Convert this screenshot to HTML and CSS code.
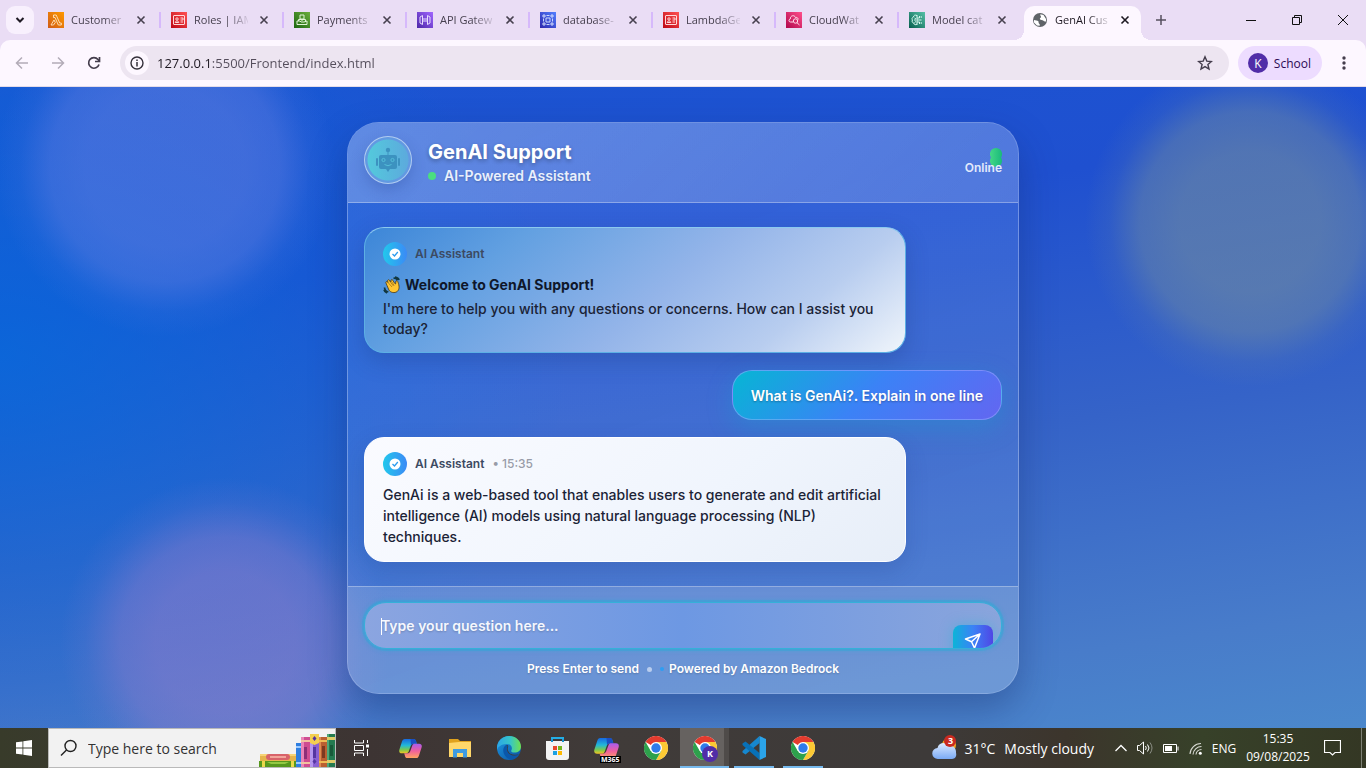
FILE: index.html
```html
<!DOCTYPE html>
<html lang="en">
<head>
<meta charset="utf-8">
<meta name="viewport" content="width=device-width, initial-scale=1">
<title>GenAI Customer Support</title>
<link rel="stylesheet" href="styles.css">
</head>
<body>
<svg class="defs" aria-hidden="true">
  <defs>
    <linearGradient id="g-orange" x1="0" y1="1" x2="1" y2="0"><stop offset="0" stop-color="#d05c17"/><stop offset="1" stop-color="#ff9900"/></linearGradient>
    <linearGradient id="g-red" x1="0" y1="1" x2="1" y2="0"><stop offset="0" stop-color="#bd0816"/><stop offset="1" stop-color="#ff5252"/></linearGradient>
    <linearGradient id="g-green" x1="0" y1="1" x2="1" y2="0"><stop offset="0" stop-color="#1b660f"/><stop offset="1" stop-color="#6cae3e"/></linearGradient>
    <linearGradient id="g-purple" x1="0" y1="1" x2="1" y2="0"><stop offset="0" stop-color="#4d27a8"/><stop offset="1" stop-color="#a166ff"/></linearGradient>
    <linearGradient id="g-blue" x1="0" y1="1" x2="1" y2="0"><stop offset="0" stop-color="#2e27ad"/><stop offset="1" stop-color="#527fff"/></linearGradient>
    <linearGradient id="g-pink" x1="0" y1="1" x2="1" y2="0"><stop offset="0" stop-color="#b0084d"/><stop offset="1" stop-color="#ff4f8b"/></linearGradient>
    <linearGradient id="g-teal" x1="0" y1="1" x2="1" y2="0"><stop offset="0" stop-color="#055f4e"/><stop offset="1" stop-color="#56c0a7"/></linearGradient>
    <linearGradient id="g-cop1" x1="0" y1="0" x2="0" y2="1"><stop offset="0" stop-color="#1769e0"/><stop offset=".45" stop-color="#22b8d8"/><stop offset=".75" stop-color="#79c950"/><stop offset="1" stop-color="#f3c422"/></linearGradient>
    <linearGradient id="g-cop2" x1="0" y1="0" x2="0" y2="1"><stop offset="0" stop-color="#a85cf0"/><stop offset=".5" stop-color="#ef5f9c"/><stop offset="1" stop-color="#ffa45f"/></linearGradient>
    <linearGradient id="g-edge1" x1="0" y1="0" x2="1" y2="0"><stop offset="0" stop-color="#2ba5e8"/><stop offset=".55" stop-color="#36c5c9"/><stop offset="1" stop-color="#6fe04f"/></linearGradient>
    <linearGradient id="g-edge2" x1="0" y1="0" x2="1" y2="1"><stop offset="0" stop-color="#1d9be5"/><stop offset="1" stop-color="#0b4f9e"/></linearGradient>
    <linearGradient id="g-cloud" x1="0" y1="0" x2="0" y2="1"><stop offset="0" stop-color="#dceaff"/><stop offset="1" stop-color="#7aaaf5"/></linearGradient>
    <symbol id="x" viewBox="0 0 10 10"><path d="M1.500 1.500l7 7M8.500 1.500l-7 7" stroke="currentColor" stroke-width="1.600" fill="none"/></symbol>
    <symbol id="iam" viewBox="0 0 16 16"><rect width="16" height="16" fill="url(#g-red)"/><rect x="2.500" y="3.500" width="11" height="9" rx=".5" fill="none" stroke="#ffd9d9"/><circle cx="6" cy="7" r="1.200" fill="none" stroke="#ffd9d9"/><path d="M4.200 10.500c0-2 3.600-2 3.600 0zM9.500 6h2.500v2H9.500M9.500 10h2.500" fill="none" stroke="#ffd9d9"/></symbol>
    <symbol id="chrome" viewBox="0 0 24 24"><circle cx="12" cy="12" r="12" fill="#fff"/><path d="M12 12L1.600 6A12 12 0 0 1 22.400 6z" fill="#e33b2e"/><path d="M12 6h10.400A12 12 0 0 1 12 24l5.200-9z" fill="#fcc934"/><path d="M1.600 6A12 12 0 0 0 12 24l5.200-9L12 12 6.800 15z" fill="#2da14c"/><circle cx="12" cy="12" r="6" fill="#fff"/><circle cx="12" cy="12" r="4.700" fill="#2f7bea"/></symbol>
    <symbol id="copilot" viewBox="0 0 24 22"><path d="M6 1h9c2 0 2.500 1 3 3l.6 2h-3c-2 0-3 1-3.600 3l-1.800 5c-.5 1.500-1.400 2-2.800 2H3c-2.500 0-3.300-1.600-2.600-4L3 4c.7-2 1.400-3 3-3z" fill="url(#g-cop1)"/><path d="M12 1h3c2 0 2.500 1 3 3l.6 2h-3c-1.600 0-2.500.5-3.100 1.800z" fill="#1a4fc4"/><path d="M18 21H9c-2 0-2.500-1-3-3l-.6-2h3c2 0 3-1 3.600-3l1.800-5c.5-1.500 1.400-2 2.800-2H21c2.500 0 3.300 1.600 2.600 4L21 18c-.7 2-1.400 3-3 3z" fill="url(#g-cop2)"/></symbol>
    <symbol id="verified" viewBox="0 0 24 24"><circle cx="12" cy="12" r="5.500" fill="#fff"/><path d="M9.500 12l2 2 3.300-4" fill="none" stroke="#2c9bee" stroke-width="1.300"/></symbol>
  </defs>
</svg>

<header class="browser">
  <nav class="tabs" aria-label="Open tabs">
    <button class="tab-search" aria-label="Search tabs"><svg width="12" height="12" viewBox="0 0 12 12"><path d="M2.500 4L6 7.500 9.500 4" fill="none" stroke="#1f1a24" stroke-width="2"/></svg></button>
    <div class="tab"><svg class="fav" viewBox="0 0 16 16"><rect width="16" height="16" fill="url(#g-orange)"/><path d="M5.500 3h2.700l3.500 8h1.600v2h-3L7 5.500H5.500zM6 8l1.300 2.500L5.500 13H3z" fill="none" stroke="#ffe6c4" stroke-width=".9"/></svg><a href="#" class="tab-name">Customer</a><button class="close" aria-label="Close tab"><svg><use href="#x"/></svg></button></div>
    <div class="tab"><svg class="fav"><use href="#iam"/></svg><a href="#" class="tab-name">Roles | IAM</a><button class="close" aria-label="Close tab"><svg><use href="#x"/></svg></button></div>
    <div class="tab"><svg class="fav" viewBox="0 0 16 16"><rect width="16" height="16" fill="url(#g-green)"/><path d="M6 3h4v4H6zM3 9h3l1 1h3l3-1v3.500H3zM4.500 9V7.500h7V9M8 7v2" fill="none" stroke="#e1f5d5"/></svg><a href="#" class="tab-name">Payments</a><button class="close" aria-label="Close tab"><svg><use href="#x"/></svg></button></div>
    <div class="tab"><svg class="fav" viewBox="0 0 16 16"><rect width="16" height="16" fill="url(#g-purple)"/><path d="M5.500 3.500v9L3 11V5zM10.500 3.500v9L13 11V5zM7 6v4M9 6v4" fill="none" stroke="#e9dcff"/></svg><a href="#" class="tab-name">API Gatew</a><button class="close" aria-label="Close tab"><svg><use href="#x"/></svg></button></div>
    <div class="tab"><svg class="fav" viewBox="0 0 16 16"><rect width="16" height="16" fill="url(#g-blue)"/><path d="M3 3h2v2H3zM11 3h2v2h-2zM3 11h2v2H3zM11 11h2v2h-2zM6 6h4v4H6zM3.500 6.500v3M12.500 6.500v3M6.500 3.500h3M6.500 12.500h3" fill="none" stroke="#dce6ff" stroke-width=".9"/></svg><a href="#" class="tab-name">database-</a><button class="close" aria-label="Close tab"><svg><use href="#x"/></svg></button></div>
    <div class="tab"><svg class="fav"><use href="#iam"/></svg><a href="#" class="tab-name">LambdaG&#101;</a><button class="close" aria-label="Close tab"><svg><use href="#x"/></svg></button></div>
    <div class="tab"><svg class="fav" viewBox="0 0 16 16"><rect width="16" height="16" fill="url(#g-pink)"/><path d="M7 10H4.500C2.500 10 2.500 7.300 4.300 7 4 3.500 8.500 2.500 9.500 5.500c2-.5 2.700 1 2.700 2" fill="none" stroke="#ffdfec"/><circle cx="9.500" cy="9" r="2.200" fill="none" stroke="#ffdfec"/><path d="M11 10.700l2.500 2.300" stroke="#ffdfec"/></svg><a href="#" class="tab-name">CloudWat</a><button class="close" aria-label="Close tab"><svg><use href="#x"/></svg></button></div>
    <div class="tab tab-before"><svg class="fav" viewBox="0 0 16 16"><rect width="16" height="16" fill="url(#g-teal)"/><path d="M8 3v10M8 3.500C6 2.500 4.500 3.500 4.500 5 3 5.500 2.500 7 3.500 8c-1 1.500 0 3 1.200 3C5 12.800 7 13.300 8 12M5 8h2M5.500 6L7 7M5.500 10.500L7 9.500M8 6h2.500V4M8 8h4.500M8 10h2.500v2" fill="none" stroke="#d5f7ee"/><circle cx="12.300" cy="5" r=".8" fill="#d5f7ee"/><circle cx="12.300" cy="11" r=".8" fill="#d5f7ee"/></svg><a href="#" class="tab-name">Model cat</a><button class="close" aria-label="Close tab"><svg><use href="#x"/></svg></button></div>
    <div class="tab active"><svg class="fav" viewBox="0 0 16 16"><circle cx="8" cy="8" r="7" fill="#5f6368"/><path d="M2 8c1.500.2 3.500.3 4.500 1.600.5.700-.4 1.400.5 2 .6.500 1 1 .7 2.200L5 13.500 2 10.500zM8.500 2.200C7.500 3.500 9.500 4 9 5.200 8.500 6 7.500 6 8 7.200c.5 1 2.500.5 3.500 1.600.6.700 1.200 1 2.600.6L14 7l-2.500-4z" fill="#fff"/></svg><a href="#" class="tab-name">GenAI Cus</a><button class="close" aria-label="Close tab"><svg><use href="#x"/></svg></button></div>
    <button class="new-tab" aria-label="New tab"><svg width="12" height="12" viewBox="0 0 12 12"><path d="M6 1v10M1 6h10" stroke="#564f5e" stroke-width="1.500"/></svg></button>
    <div class="window-buttons">
      <button aria-label="Minimize"><svg width="10" height="10"><path d="M0 5.500h10" stroke="#111"/></svg></button>
      <button aria-label="Restore"><svg width="10" height="10"><path d="M.5 2.500h7v7h-7zM2.500 2.500v-2h7v7h-2" fill="none" stroke="#111"/></svg></button>
      <button aria-label="Close window"><svg width="10" height="10"><path d="M0 0l10 10M10 0L0 10" stroke="#111"/></svg></button>
    </div>
  </nav>
  <div class="toolbar">
    <button class="tool" aria-label="Back"><svg width="16" height="16" viewBox="0 0 16 16"><path d="M14 8H3M8 2.500L2.500 8 8 13.500" fill="none" stroke="#b3acb8" stroke-width="1.500"/></svg></button>
    <button class="tool" aria-label="Forward"><svg width="16" height="16" viewBox="0 0 16 16"><path d="M2 8h11M8 2.500L13.500 8 8 13.500" fill="none" stroke="#b3acb8" stroke-width="1.500"/></svg></button>
    <button class="tool" aria-label="Reload"><svg width="16" height="16" viewBox="0 0 16 16"><path d="M13 9.500A5.300 5.300 0 1 1 12 4.500l1.200 1.500" fill="none" stroke="#443d4c" stroke-width="1.700"/><path d="M13.500 2v4.500H9" fill="none" stroke="#443d4c" stroke-width="1.700"/></svg></button>
    <div class="omnibox">
      <button class="site-info" aria-label="Site information"><svg width="14" height="14" viewBox="0 0 14 14"><circle cx="7" cy="7" r="6" fill="none" stroke="#35303b" stroke-width="1.400"/><path d="M7 6v4.500M7 3.500V5" stroke="#35303b" stroke-width="1.500"/></svg></button>
      <input class="url" type="text" aria-label="Address" value="127.0.0.1:5500/Frontend/index.html">
      <button class="star" aria-label="Bookmark"><svg width="16" height="16" viewBox="0 0 16 16"><path d="M8 1.800l1.800 4.300 4.600.4-3.500 3 1.100 4.500L8 11.600 4 14l1.100-4.500-3.500-3 4.600-.4z" fill="none" stroke="#443d4c" stroke-width="1.400"/></svg></button>
    </div>
    <button class="profile"><span class="profile-letter">K</span>School</button>
    <button class="tool" aria-label="Menu"><svg width="4" height="16"><g fill="#443d4c"><circle cx="2" cy="3" r="1.700"/><circle cx="2" cy="8" r="1.700"/><circle cx="2" cy="13" r="1.700"/></g></svg></button>
  </div>
</header>

<main class="stage">
  <section class="card">
    <header class="card-head">
      <div class="avatar"><svg width="26" height="26" viewBox="0 0 26 26" fill="#3c92c0"><circle cx="13" cy="3" r="2.200"/><path d="M12.500 4h1v5h-1z"/><rect x="4" y="8" width="18" height="14" rx="2"/><rect x="1" y="11" width="2" height="8" rx="1"/><rect x="23" y="11" width="2" height="8" rx="1"/><path d="M11 22h4l-2 3z"/><g fill="none" stroke="#55bed9"><circle cx="8.500" cy="13" r="1.600"/><circle cx="17.500" cy="13" r="1.600"/><path d="M9.500 17.500q3.500 2.500 7 0"/></g></svg></div>
      <div class="brand"><h1>GenAI Support</h1><p><i class="dot"></i>AI-Powered Assistant</p></div>
      <div class="status"><svg class="pulse" width="12" height="20" viewBox="0 0 12 20"><defs><linearGradient id="g-pulse"><stop offset="0" stop-color="#43d786"/><stop offset="1" stop-color="#1ab97c"/></linearGradient></defs><path d="M6 0a6 6 0 0 1 5.500 8.500q-.7 1 0 2A6 6 0 1 1 .5 10.500q.7-1 0-2A6 6 0 0 1 6 0z" fill="url(#g-pulse)"/></svg><span>Online</span></div>
    </header>
    <div class="messages">
      <article class="bubble bot welcome">
        <header><i class="badge"><svg width="24" height="24"><use href="#verified"/></svg></i><span>AI Assistant</span></header>
        <h2><svg width="18" height="18" viewBox="0 0 18 18" role="img" aria-label="Waving hand"><path d="M4 9.500L2.800 6.600q.2-1.500 1.500-.8L5 6.500 4.500 4.600q.6-1.500 1.800-.5L7.800 6l.2-2q1-1.200 1.900.3l1.300 2.500L12.600 8l.3-3q1.300-.9 1.900.6c1.700 4.500 1.900 7.600-.6 9.900-2.500 1.900-6.500 1.200-8.200-1.300z" fill="#ffc533" stroke="#493818" stroke-width=".8"/><path d="M5 6.500l4 4.500M6.500 5L10.500 10M8.500 5.500l2.700 4" stroke="#9a6b13" stroke-width=".7"/><path d="M10.500 2.300q3-.6 4 2M12 1q3.500.4 4 3M1.500 11.500q.2 3.500 3.800 4.500M1 13.700q.7 2.500 3 3.300" fill="none" stroke="#12373f" stroke-width="1.700"/></svg>Welcome to GenAI Support!</h2>
        <p>I'm here to help you with any questions or concerns. How can I assist you today?</p>
      </article>
      <article class="bubble user"><p>What is GenAi?. Explain in one line</p></article>
      <article class="bubble bot reply">
        <header><i class="badge"><svg width="24" height="24"><use href="#verified"/></svg></i><span>AI Assistant</span><time>• 15:35</time></header>
        <p>GenAi is a web-based tool that enables users to generate and edit artificial intelligence (AI) models using natural language processing (NLP) techniques.</p>
      </article>
    </div>
    <footer class="composer">
      <div class="field">
        <input type="text" aria-label="Your question" placeholder="Type your question here...">
        <button class="send" aria-label="Send"><svg width="18" height="18" viewBox="0 0 18 18"><path d="M16 2L1.500 7l6 2.700L10.500 16zM16 2L7.500 9.700" fill="none" stroke="#fff" stroke-width="1.500" stroke-linejoin="round"/></svg></button>
      </div>
      <div class="hints"><span>Press Enter to send</span><i class="sep"></i><span class="powered">Powered by Amazon Bedrock</span></div>
    </footer>
  </section>
</main>

<footer class="taskbar">
  <button class="start" aria-label="Start"><svg width="16" height="16" viewBox="0 0 16 16"><path d="M0 2.300l6.500-.9v6.200H0zM7.300 1.300L16 0v7.600H7.300zM0 8.400h6.500v6.200L0 13.700zM7.300 8.400H16V16l-8.700-1.300z" fill="#fff"/></svg></button>
  <div class="search">
    <svg width="18" height="18" viewBox="0 0 18 18"><circle cx="10.500" cy="7" r="5.500" fill="none" stroke="#222" stroke-width="1.400"/><path d="M6.500 11L1 16.500" stroke="#222" stroke-width="1.400"/></svg>
    <input type="text" aria-label="Search" placeholder="Type here to search">
    <svg class="books" width="76" height="34" viewBox="0 0 76 34"><path d="M1 21h36v7H1z" fill="#e6b44c"/><path d="M1 21h36v2H1z" fill="#f7d374"/><rect x="7" y="21" width="24" height="6" rx="3" fill="#d8636a"/><rect x="11" y="23" width="16" height="2" fill="#f2a59a"/><path d="M0 28h38v6H0z" fill="#56981d"/><path d="M8 29h22l-4 2H12z" fill="#92c943"/><path d="M3 28h3v6H3zM32 28h3v6h-3z" fill="#e9d84b"/><path d="M37 10h5v24h-5z" fill="#2f7fe0"/><path d="M37 13h5v2h-5zM37 29h5v2h-5z" fill="#9ecbff"/><path d="M42 4h9v30h-9z" fill="#cf4d91"/><path d="M42 4h3v30h-3z" fill="#ea85b8"/><path d="M45 14h3v12h-3z" fill="#8e2f78"/><path d="M42 7h9v2h-9zM42 29h9v2h-9z" fill="#f1c4a0"/><path d="M51 1h9v33h-9z" fill="#8960d2"/><path d="M51 1h3v33h-3z" fill="#b596ee"/><path d="M51 1h9v9l-4.500 2L51 10z" fill="#f3cf4f"/><path d="M54 14h3v11h-3z" fill="#5535a0"/><path d="M55.500 3l2 2.500-2 2.500-2-2.500zM55.500 26l2 2.500-2 2.500-2-2.500z" fill="#5535a0"/><path d="M60 4h8v30h-8z" fill="#ba5f31"/><path d="M60 4h2v30h-2z" fill="#dd8c52"/><path d="M60 7h8v2h-8zM60 28h8v2h-8z" fill="#efbb54"/><path d="M63 13h3v12h-3z" fill="#7d3920"/><path d="M68 1h8v33h-8z" fill="#247a50"/><path d="M68 1h2v33h-2z" fill="#4fa878"/><path d="M68 4h8v3h-8zM68 27h8v3h-8z" fill="#dfcd69"/><path d="M71 12h3v11h-3z" fill="#185a3a"/></svg>
  </div>
  <div class="apps">
    <button aria-label="Task view"><svg width="17" height="16" viewBox="0 0 17 16"><path d="M1.500 0v3h9V0M1.500 5.500h9v5h-9zM1.500 16v-3h9v3M14.500 0v3M14.500 9v7" fill="none" stroke="#fff"/><path d="M13 4.500h3v3h-3z" fill="#fff"/></svg></button>
    <button aria-label="Copilot"><svg width="23" height="21"><use href="#copilot"/></svg></button>
    <button aria-label="File Explorer"><svg width="22" height="19" viewBox="0 0 22 19"><path d="M0 0h9l2 2h11v16H0z" fill="#e0a21d"/><path d="M0 4l10-1h12v15H0z" fill="#ffd76a"/><path d="M4 10h14v8.500h-4V14H8v4.500H4z" fill="#3f9be0"/></svg></button>
    <button aria-label="Edge"><svg width="24" height="24" viewBox="0 0 24 24"><circle cx="12" cy="12" r="12" fill="url(#g-edge2)"/><path d="M0 12C0 5 5.500 0 12 0c7 0 12 5 12 10.500 0 4-3 6-6.300 6-2.700 0-4-1-3.300-2.200C16 11 13.500 8 9.800 8 4.500 8 .5 11 0 14z" fill="url(#g-edge1)"/><path d="M9 9.500c-4 4-1.500 10 3.500 11.500 3 .9 6 .4 8.500-1.500 1-.7.5-1.300-.5-1C14.500 20 9.500 16 11 11.500q.6-2-.4-2.500z" fill="#403b39"/><path d="M8.500 9.500c-5 4.500-1 12.500 5.500 14.200 3.500-.5 6.300-2 8-5-5 2-11.500.3-12-5.200-.1-2 .8-3 .5-4z" fill="#0a57aa"/></svg></button>
    <button aria-label="Store"><svg width="23" height="24" viewBox="0 0 23 24"><path d="M6 7V2h11v5" fill="none" stroke="#24aee5" stroke-width="2"/><path d="M0 5h23v16q0 3-3 3H3q-3 0-3-3z" fill="#f3f3f3"/><path d="M7 10h4v4H7z" fill="#e7482a"/><path d="M12 10h4v4h-4z" fill="#74b51c"/><path d="M7 15h4v4H7z" fill="#1ba1e2"/><path d="M12 15h4v4h-4z" fill="#ffb900"/><path d="M6 3.500V6M17 3.500V6" stroke="#1592d0" stroke-width="2"/></svg></button>
    <button aria-label="Microsoft 365"><svg width="25" height="23"><use href="#copilot"/></svg><b class="m365">M365</b></button>
    <button aria-label="Chrome"><svg width="24" height="24"><use href="#chrome"/></svg></button>
    <button class="open current" aria-label="Chrome, School"><svg width="24" height="24"><use href="#chrome"/></svg><b class="chip">K</b></button>
    <button class="open" aria-label="Visual Studio Code"><svg width="24" height="24" viewBox="0 0 24 24"><path d="M17.500 0v7L3.500 18.500l-3-2V15z" fill="#1687cf"/><path d="M17.500 24v-7L3.500 5.500l-3 2V9z" fill="#0871b8"/><path d="M17.500 0L24 3v18l-6.500 3z" fill="#2ba4ea"/></svg></button>
    <button class="open" aria-label="Chrome, second window"><svg width="24" height="24"><use href="#chrome"/></svg></button>
  </div>
  <div class="tray">
    <button class="weather"><span class="cloud"><svg width="26" height="24" viewBox="0 0 26 24"><circle cx="17" cy="9" r="7" fill="#f5a623"/><path d="M6 23a5.500 5.500 0 0 1-.5-11C6.500 7 13.500 5 16.500 10c5-1 8 3 7.500 7 1 3-1 6-4 6z" fill="url(#g-cloud)"/></svg><b>3</b></span><span>31°C</span><span>Mostly cloudy</span></button>
    <button aria-label="Hidden icons"><svg width="12" height="8"><path d="M.5 7L6 1.500 11.500 7" fill="none" stroke="#fff" stroke-width="1.300"/></svg></button>
    <button aria-label="Volume"><svg width="17" height="14" viewBox="0 0 17 14"><path d="M.5 4.500h2L6.500 1v12l-4-3.500h-2z" fill="none" stroke="#fff"/><path d="M8.500 5q1.500 2 0 4M10.500 3.500q3 3.500 0 7" fill="none" stroke="#fff"/><path d="M13 1.500q4 5.500 0 11" fill="none" stroke="#8c8f86"/></svg></button>
    <button aria-label="Battery"><svg width="16" height="9"><path d="M.5.5h13v8H.5zM15 2.500v4" fill="none" stroke="#fff"/><path d="M2 2h7v5H2z" fill="#fff"/></svg></button>
    <button aria-label="Network"><svg width="13" height="13" viewBox="0 0 13 13"><path d="M1 12A11 11 0 0 1 12 1.500M4 12.500A8.500 8.500 0 0 1 12.500 4.500M7 12.500A5.500 5.500 0 0 1 12.500 7.500" fill="none" stroke="#d9dbd5" stroke-width="1.100"/><circle cx="11.300" cy="11.300" r="1.500" fill="#fff"/></svg></button>
    <button class="lang">ENG</button>
    <button class="clock"><span>15:35</span><span>09/08/2025</span></button>
    <button class="notes" aria-label="Notifications"><svg width="17" height="16" viewBox="0 0 17 16"><path d="M.5.500h16v12h-5.500l-2.500 2.500-2.500-2.500H.5z" fill="none" stroke="#fff" stroke-width="1.200"/></svg></button>
    <button class="desktop" aria-label="Show desktop"></button>
  </div>
</footer>
</body>
</html>
```

FILE: styles.css
```css
* { box-sizing: border-box; }
body {
  margin: 0;
  min-height: 100vh;
  display: flex;
  flex-direction: column;
  font-family: Inter, "Liberation Sans", sans-serif;
}
h1, h2, p { margin: 0; }
button { border: 0; padding: 0; background: none; color: inherit; font: inherit; }
input { border: 0; padding: 0; background: none; font: inherit; min-width: 0; outline: 0; }
svg { display: block; flex: none; }
.defs { position: absolute; width: 0; height: 0; }

/* Browser frame */
.browser { font-family: "Open Sans", "Noto Sans", sans-serif; font-size: 12px; color: #47404f; background: #eaddf5; }
.tabs { display: flex; align-items: center; height: 40px; }
.tab-search { width: 28px; height: 28px; margin: 0 4px 0 6px; border-radius: 9px; background: #f8f0fd; display: grid; place-items: center; }
.tab { display: flex; align-items: center; width: 123px; height: 34px; padding: 0 10px 6px; align-self: flex-end; position: relative; }
.tab:not(.active):not(.tab-before)::after { content: ""; position: absolute; right: 0; top: 6px; width: 2px; height: 16px; background: #d6b9fb; }
.fav { width: 16px; height: 16px; margin-right: 7px; }
.tab-name { flex: 1; overflow: hidden; white-space: nowrap; font-size: 11px; line-height: 16px; color: inherit; text-decoration: none; -webkit-mask-image: linear-gradient(90deg, #000 60%, transparent 105%); mask-image: linear-gradient(90deg, #000 60%, transparent 105%); }
.close { width: 10px; height: 10px; margin: 0 5px 0 11px; }
.close svg { width: 10px; height: 10px; }
.active { width: 117px; padding: 0 6px 6px 8px; background: #fdf7ff; border-radius: 10px 10px 0 0; color: #1d1821; margin-left: 2px; }
.active::before, .active::after { content: ""; position: absolute; bottom: 0; width: 10px; height: 10px; }
.active::before { left: -10px; background: radial-gradient(circle at 0 0, transparent 10px, #fdf7ff 10px); }
.active::after { right: -10px; background: radial-gradient(circle at 100% 0, transparent 10px, #fdf7ff 10px); }
.new-tab { margin-left: 14px; }
.window-buttons { margin-left: auto; display: flex; }
.window-buttons button { width: 46px; height: 40px; display: grid; place-items: center; }
.toolbar { display: flex; align-items: center; height: 47px; padding: 0 4px; background: #fdf7ff; border-bottom: 1px solid #e4dce9; border-radius: 10px 10px 0 0; }
.tool { width: 36px; height: 36px; display: grid; place-items: center; }
.omnibox { flex: 1; display: flex; align-items: center; height: 34px; margin: 0 9px 0 8px; padding: 0 16px 0 5px; border-radius: 17px; background: #ede5f1; }
.site-info { width: 24px; height: 24px; border-radius: 12px; background: #fdf7ff; display: grid; place-items: center; }
.url { flex: 1; margin-left: 8px; font-size: 13px; color: transparent; background: linear-gradient(90deg, #1d1821 55px, #544d5b 55px); -webkit-background-clip: text; background-clip: text; }
.profile { display: flex; align-items: center; gap: 6px; height: 34px; padding: 0 11px 0 10px; border-radius: 17px; background: #eddcff; color: #2b0a55; margin-right: 4px; }
.profile-letter { width: 20px; height: 20px; border-radius: 10px; background: #512da8; color: #fff; display: grid; place-items: center; }

/* Page */
.stage {
  flex: 1;
  display: flex;
  justify-content: center;
  align-items: flex-start;
  padding: 35px 16px 34px;
  overflow: hidden;
  background:
    radial-gradient(circle at 165px 80px, rgba(112, 130, 226, .46) 80px, rgba(112, 130, 226, .38) 115px, rgba(112, 130, 226, .1) 145px, transparent 170px),
    radial-gradient(circle at calc(100% - 116px) 135px, rgba(122, 146, 156, .55) 70px, rgba(122, 146, 156, .44) 110px, rgba(122, 146, 156, .12) 140px, transparent 165px),
    radial-gradient(circle at 225px 555px, rgba(145, 125, 205, .55) 70px, rgba(145, 125, 205, .44) 105px, rgba(145, 125, 205, .12) 140px, transparent 165px),
    radial-gradient(ellipse 42% 65% at 0 42%, rgba(0, 112, 222, .65), transparent),
    linear-gradient(172deg, #1b55d2 0%, #1f50d0 28%, #3563c8 58%, #487cca 86%, #4b88cc 100%);
}
.card {
  width: 100%;
  max-width: 672px;
  border: 1px solid rgba(255, 255, 255, .3);
  border-radius: 32px;
  overflow: hidden;
  color: #fff;
  background: linear-gradient(160deg, rgba(120, 160, 245, .22), rgba(130, 165, 235, .2));
  box-shadow: 0 16px 36px rgba(20, 40, 100, .35);
}
.card-head { display: flex; align-items: flex-start; gap: 16px; padding: 13px 16px 18px; border-bottom: 1px solid rgba(255, 255, 255, .3); background: linear-gradient(135deg, rgba(255, 255, 255, .24), rgba(255, 255, 255, .14)); }
.avatar { width: 48px; height: 48px; border: 1px solid rgba(255, 255, 255, .5); border-radius: 24px; display: grid; place-items: center; background: radial-gradient(circle, transparent 20px, #6299e2 21px), linear-gradient(90deg, #53cbdc, #5da8dd); box-shadow: 0 6px 14px rgba(30, 60, 140, .25); }
.brand { flex: 1; padding-top: 1px; margin-bottom: -1px; }
.brand h1 { font-size: 20px; line-height: 30px; font-weight: 700; text-shadow: 0 2px 4px rgba(0, 0, 0, .3); }
.brand p { display: flex; align-items: center; gap: 8px; font-size: 14px; line-height: 18px; font-weight: 600; color: #e9f0fd; text-shadow: 0 1px 2px rgba(0, 0, 0, .2); }
.dot { width: 8px; height: 8px; border-radius: 4px; background: #4ade80; }
.status { position: relative; padding-top: 23px; font-size: 12px; line-height: 18px; font-weight: 600; color: #e3eafc; }
.status span { position: relative; }
.pulse { position: absolute; right: 0; top: 12px; }

.messages { display: flex; flex-direction: column; gap: 17px; padding: 24px 16px; }
.bubble { border: 1px solid; border-radius: 20px; font-size: 14px; line-height: 21px; font-weight: 500; }
.bot { align-self: flex-start; width: 85%; padding: 14px 18px; color: #1b2336; }
.bot header { display: flex; align-items: center; gap: 8px; margin-bottom: 8px; font-size: 12px; line-height: 24px; font-weight: 600; color: #3c4a62; }
.badge { width: 24px; height: 24px; border-radius: 12px; background: linear-gradient(90deg, #22c8ec, #3b8af6); }
.bot time { font-weight: 500; color: #989ca8; }
.welcome { padding-bottom: 13px; border-color: #5db0e4; border-top-color: #8cc9ee; background: linear-gradient(140deg, #3c86d8 0%, #62a0e1 24%, #93b4e9 54%, #b8cdef 78%, #f0f5fb 100%); box-shadow: 0 8px 22px rgba(30, 60, 130, .3); }
.welcome h2 { display: flex; align-items: center; gap: 4px; margin-bottom: 4px; font-size: 14px; line-height: 21px; font-weight: 700; color: #0f172a; }
.welcome p { line-height: 20px; }
.reply { border-color: #fff; background: linear-gradient(140deg, #fafbff, #f0f5fd 60%, #e7eef8); box-shadow: 0 8px 22px rgba(30, 60, 130, .2); }
.user { align-self: flex-end; max-width: 85%; padding: 14px 18px 13px; font-weight: 600; border-color: rgba(150, 170, 255, .55); background: linear-gradient(135deg, #06b6d4, #3b82f6 50%, #6366f1); box-shadow: 0 8px 26px rgba(6, 182, 212, .25); text-shadow: 0 1px 2px rgba(0, 0, 0, .3); }

.composer { padding: 15px 16px 14px; border-top: 1px solid rgba(255, 255, 255, .3); background: rgba(225, 240, 240, .18); }
.field { position: relative; overflow: hidden; height: 47px; border: 1px solid #35b0d9; border-radius: 22px; background: linear-gradient(90deg, #8ba5e0, #6d98e3 50%, #8aa5dc); box-shadow: 0 0 0 2px rgba(30, 175, 215, .3), 0 0 4px 2px rgba(30, 175, 215, .3); }
.field::before { content: ""; position: absolute; left: 16px; top: 15px; width: 1px; height: 17px; background: #fff; }
.field input { width: 100%; height: 100%; padding: 0 64px 0 16px; font-size: 14px; font-weight: 600; color: #fff; border-radius: 22px; }
.field input::placeholder { color: #f4f7fe; opacity: 1; text-shadow: 0 1px 2px rgba(0, 0, 0, .2); }
.send { position: absolute; right: 8px; top: 22px; width: 40px; height: 40px; padding-top: 7px; border-radius: 8px; display: grid; justify-items: center; align-items: start; background: linear-gradient(90deg, #0cb4d8, #3b82f6 50%, #4f46e5); box-shadow: 0 0 14px rgba(6, 182, 212, .35); }
.hints { display: flex; align-items: center; justify-content: center; margin-top: 10px; font-size: 12px; line-height: 20px; font-weight: 600; text-shadow: 0 1px 2px rgba(0, 0, 0, .2); }
.sep { width: 5px; height: 5px; margin: 0 8px; border-radius: 3px; background: #b9cdee; }
.powered { display: flex; align-items: center; gap: 5px; }
.powered::before { content: ""; width: 4px; height: 4px; border-radius: 2px; background: #2e9df2; }

/* Taskbar */
.taskbar { display: flex; height: 40px; font-family: "Open Sans", "Noto Sans", sans-serif; font-size: 14px; color: #fff; background: linear-gradient(90deg, #383b2a 0%, #3a3930 8%, #3d3433 27%, #403b39 45%, #3d3a39 68%, #3c352c 78%, #374129 88%, #343724 100%); }
.start { width: 48px; display: grid; place-items: center; }
.search { display: flex; align-items: center; width: 288px; padding-left: 11px; border: 1px solid #b9b9b9; background: #f2f2f2; }
.search input { flex: 1; margin-left: 10px; }
.search input::placeholder { color: #333; opacity: 1; }
.books { align-self: flex-end; }
.apps { display: flex; padding-left: 1px; }
.apps button { position: relative; width: 49px; display: grid; place-items: center; }
.apps .open::after { content: ""; position: absolute; left: 5px; right: 4px; bottom: 0; height: 2px; background: #76b9ed; }
.apps .current { background: linear-gradient(90deg, #666260 44px, #4f4b49 44px); }
.apps .current::after { left: 0; right: 0; }
.m365 { position: absolute; left: 18px; bottom: 5px; padding: 0 1px; font-size: 7px; line-height: 7px; background: #000; }
.chip { position: absolute; left: 22px; top: 18px; width: 16px; height: 16px; border-radius: 8px; font-size: 9px; line-height: 16px; background: #512da8; }
.tray { margin-left: auto; display: flex; align-items: center; }
.tray > button { display: grid; place-items: center; width: 25px; height: 40px; }
.tray > .weather { display: flex; width: auto; gap: 9px; margin-right: 14px; }
.cloud { position: relative; margin-right: -3px; }
.cloud b { position: absolute; left: 12px; top: -1px; width: 12px; height: 12px; border-radius: 6px; font-size: 9px; line-height: 12px; background: #c92a20; }
.tray > .lang { width: 32px; font-size: 12px; }
.tray > .clock { width: 76px; font-size: 12px; line-height: 18px; align-content: center; }
.tray > .notes { width: 45px; padding-right: 20px; justify-content: end; }
.tray > .desktop { width: 5px; border-left: 1px solid #7d8074; }
```
